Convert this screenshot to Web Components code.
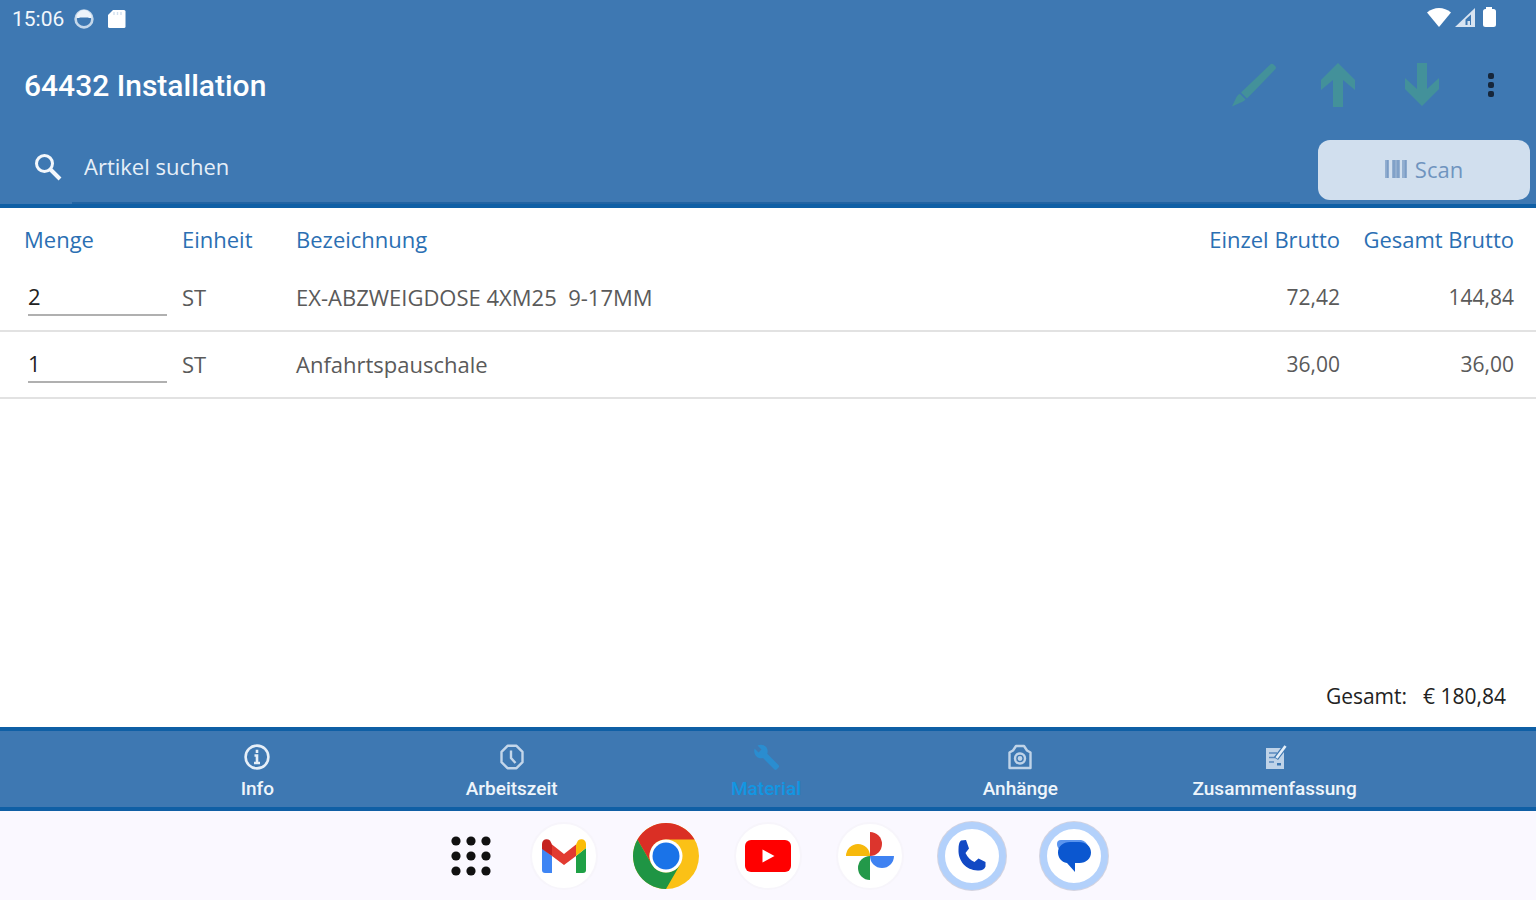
<!DOCTYPE html>
<html lang="de">
<head>
<meta charset="utf-8">
<meta name="viewport" content="width=device-width, initial-scale=1">
<title>64432 Installation</title>
<style>
      :root {
            --primary: #3e78b2;
            --primary-dark: #0f5fa5;
            --accent: #1296e2;
            --line: #e2e2e2;
      }

      body {
            margin: 0;
            min-height: 100vh;
            display: flex;
            flex-direction: column;
            background: #fff;
            font-family: "Open Sans", "Noto Sans", sans-serif;
            font-size: 22px;
      }

      main {
            flex: 1;
            display: flex;
            flex-direction: column;
            justify-content: space-between;
      }
</style>
</head>
<body>
      <status-bar time="15:06"></status-bar>
      <app-toolbar>64432 Installation</app-toolbar>
      <search-bar placeholder="Artikel suchen"></search-bar>
      <main>
            <material-table></material-table>
            <total-line label="Gesamt:">€ 180,84</total-line>
      </main>
      <tab-bar>
            <tab-item>
                  <svg slot="icon" width="28" height="28" viewBox="0 0 28 28" fill="none" stroke="#e6eff8" stroke-width="2.6">
                        <circle cx="14" cy="14" r="11.4"/>
                        <path d="M11.5 12.5H14V20M11 20h6M14 6.8v3.2"/>
                  </svg>
                  Info
            </tab-item>
            <tab-item>
                  <svg slot="icon" width="28" height="28" viewBox="0 0 28 28" fill="none" stroke="#c3d6ea" stroke-width="2.4">
                        <path d="M9.5 2.8h9l6 6v10.4l-6 6h-9l-6-6V8.8z" stroke-linejoin="round"/>
                        <path d="M13 7.5v7.5l4.500 5"/>
                  </svg>
                  Arbeitszeit
            </tab-item>
            <tab-item active>
                  <svg slot="icon" width="28" height="28" viewBox="0 0 28 28" fill="#2a8dd0">
                        <path d="M2.500 5.500 6.500 9.500 9.500 6.500 5.500 2.500C9 .8 14 2 15.400 6.500c.4 1.600.3 3-.2 4.300L26.500 22c.8.8.8 1.800 0 2.600l-1.700 1.700c-.8.8-1.800.8-2.600 0L11 15c-4.500 1.500-10-2.500-8.500-9.500z"/>
                  </svg>
                  Material
            </tab-item>
            <tab-item>
                  <svg slot="icon" width="28" height="28" viewBox="0 0 28 28" fill="none" stroke="#bfd3e8" stroke-width="2.4">
                        <path d="M3.500 25V9.500L7 7.500 10 3h8l3 4.500 3.500 2V25z" stroke-linejoin="round"/>
                        <circle cx="14" cy="15.500" r="5"/>
                        <circle cx="14" cy="15.500" r="1.200"/>
                  </svg>
                  Anhänge
            </tab-item>
            <tab-item>
                  <svg slot="icon" width="28" height="28" viewBox="0 0 28 28">
                        <path d="M5 5h18v21H5z" fill="#bfd3e8"/>
                        <path d="M8 10h8M8 14.500h7M8 19h5" stroke="#5b8bbe" stroke-width="1.6"/>
                        <path d="M16 20h4v2.500h-4z" fill="#3e78b2"/>
                        <path d="M15 15.500 24.500 3" stroke="#3e78b2" stroke-width="5"/>
                        <path d="M15.500 15 24.500 3" stroke="#e4eef8" stroke-width="2.6"/>
                  </svg>
                  Zusammenfassung
            </tab-item>
      </tab-bar>
      <task-dock></task-dock>

<script>
class StatusBar extends HTMLElement {
      constructor() {
            super();
            this._shadowRoot = this.attachShadow({ mode: "open" });
      }
      connectedCallback() {
            this.render();
      }

      render() {
            this._shadowRoot.innerHTML =
                  `
                  <style>
                        :host {
                              display: flex;
                              align-items: center;
                              justify-content: space-between;
                              height: 38px;
                              padding: 0 37px 0 12px;
                              background: var(--primary);
                              color: #f2f7fc;
                              font-family: Roboto, sans-serif;
                              font-size: 21px;
                        }

                        div {
                              display: flex;
                              align-items: center;
                              gap: 10px;
                        }

                        .signal {
                              gap: 4px;
                              padding-bottom: 4px;
                        }
                  </style>
                  <div>
                        <span>${this.getAttribute("time")}</span>
                        <svg width="20" height="20" viewBox="0 0 20 20">
                              <circle cx="10" cy="10" r="8.400" fill="none" stroke="#c4d7ea" stroke-width="2.6"/>
                              <path d="M2.500 6.500C4 3 7 1 10 1s6 2 7.500 5.500V9h-15z" fill="#eef4fa"/>
                              <path d="M5.500 8.500h9c0 3-2 4.500-4.500 4.500s-4.500-1.500-4.500-4.500z" fill="#3e78b2"/>
                        </svg>
                        <svg width="24" height="20" viewBox="0 0 24 20">
                              <path d="M9 1h11a1.500 1.500 0 0 1 1.500 1.500v15A1.500 1.500 0 0 1 20 19H5.500A1.500 1.500 0 0 1 4 17.500V6z" fill="#fff"/>
                              <path d="M10 3v3M13.500 3v3M17 3v3" stroke="#d2e0ee" stroke-width="1.4"/>
                        </svg>
                  </div>
                  <div class="signal">
                        <svg width="24" height="20" viewBox="0 0 24 20"><path d="M0 5.500C7-.5 17-.5 24 5.500L12 20z" fill="#fff"/></svg>
                        <svg width="20" height="20" viewBox="0 0 20 20">
                              <path d="M0 20 20 1v19z" fill="#d8e4f1"/>
                              <path d="M10.500 18v-5.500l5.500-5V18z" fill="#3e78b2"/>
                              <path d="M12.500 14h2.500v4h-2.500z" fill="#d8e4f1"/>
                        </svg>
                        <svg width="20" height="22" viewBox="0 0 20 22"><path d="M7 3V1h6v2h1.500A2.500 2.500 0 0 1 17 5.500v13a2.500 2.500 0 0 1-2.500 2.500h-8A2.500 2.500 0 0 1 4 18.500v-13A2.500 2.500 0 0 1 6.500 3z" fill="#fff"/></svg>
                  </div>
            `;
      }
}

class AppToolbar extends HTMLElement {
      constructor() {
            super();
            this._shadowRoot = this.attachShadow({ mode: "open" });
      }
      connectedCallback() {
            this.render();
      }

      render() {
            this._shadowRoot.innerHTML =
                  `
                  <style>
                        :host {
                              display: flex;
                              align-items: center;
                              justify-content: space-between;
                              height: 94px;
                              padding: 0 36px 2px 24px;
                              background: var(--primary);
                              color: #fff;
                        }

                        h1 {
                              margin: 0;
                              font-family: Roboto, sans-serif;
                              font-size: 30px;
                              font-weight: 500;
                        }

                        .actions {
                              display: flex;
                              align-items: center;
                              gap: 36px;
                        }

                        button {
                              display: flex;
                              justify-content: center;
                              width: 48px;
                              padding: 0;
                              border: 0;
                              background: none;
                              color: #43919a;
                        }

                        .more {
                              width: 18px;
                              color: #16263a;
                        }
                  </style>
                  <h1><slot></slot></h1>
                  <div class="actions">
                        <button type="button" aria-label="Bearbeiten">
                              <svg width="48" height="44" viewBox="0 0 48 44" fill="currentColor">
                                    <path d="M40.500 1.200q1.500-1 3 .3l1.800 1.800q1.300 1.500 0 3L17 35.500 11 29.500zM9.800 30.800l5.700 5.700q-1 1.200-3 2.200L2 43.500 6.500 34q1.300-2.500 3.300-3.200z"/>
                              </svg>
                        </button>
                        <button type="button" aria-label="Nach oben">
                              <svg width="36" height="44" viewBox="0 0 36 44" fill="currentColor">
                                    <path d="M18 0 35 17v10L23 17v27H13V17L1 27V17z"/>
                              </svg>
                        </button>
                        <button type="button" aria-label="Nach unten">
                              <svg width="36" height="44" viewBox="0 0 36 44" fill="currentColor">
                                    <path d="M18 43 1 26V15l12 11V0h10v26l12-11v11z"/>
                              </svg>
                        </button>
                        <button class="more" type="button" aria-label="Mehr">
                              <svg width="8" height="26" viewBox="0 0 8 26" fill="currentColor">
                                    <rect x="1" y="1" width="6" height="6" rx="2"/>
                                    <rect x="1" y="10" width="6" height="6" rx="2"/>
                                    <rect x="1" y="19" width="6" height="6" rx="2"/>
                              </svg>
                        </button>
                  </div>
            `;
      }
}

class SearchBar extends HTMLElement {
      constructor() {
            super();
            this._shadowRoot = this.attachShadow({ mode: "open" });
      }
      connectedCallback() {
            this.render();
      }

      render() {
            const placeholder = this.getAttribute("placeholder");
            this._shadowRoot.innerHTML =
                  `
                  <style>
                        :host {
                              display: flex;
                              align-items: stretch;
                              height: 70px;
                              border-bottom: 4px solid var(--primary-dark);
                              background: var(--primary);
                        }

                        label {
                              display: flex;
                              align-items: center;
                              justify-content: flex-end;
                              box-sizing: border-box;
                              width: 72px;
                              padding: 0 10px 4px 0;
                        }

                        input {
                              flex: 1;
                              min-width: 0;
                              padding: 0 12px 4px;
                              border: 0;
                              border-bottom: 2px solid #2264a3;
                              outline: 0;
                              background: none;
                              color: #fff;
                              font: inherit;
                        }

                        input::placeholder {
                              color: #e6eff8;
                              opacity: 1;
                        }

                        button {
                              display: flex;
                              align-items: center;
                              justify-content: center;
                              gap: 8px;
                              width: 212px;
                              margin: 6px 6px 4px 28px;
                              padding: 0 0 2px;
                              border: 0;
                              border-radius: 12px;
                              background: #d1dfee;
                              color: #6f94bf;
                              font: inherit;
                        }
                  </style>
                  <label for="search">
                        <svg width="28" height="28" viewBox="0 0 28 28" fill="none" stroke="#f4f8fc" stroke-width="3">
                              <circle cx="10.500" cy="10.500" r="8"/>
                              <path d="M16.500 16.500 26 26" stroke-width="4"/>
                        </svg>
                  </label>
                  <input id="search" type="text" placeholder="${placeholder}" aria-label="${placeholder}">
                  <button type="button">
                        <svg width="22" height="18" viewBox="0 0 22 18">
                              <path d="M0 0h4v18H0zM7 0h8v18H7zM17 0h5v18h-5z" fill="#93afd0"/>
                              <path d="M2.500 0v18M9 0v18M13 0v18M20.500 0v18" stroke="#7b9dc5" stroke-width="1.5"/>
                        </svg>
                        Scan
                  </button>
            `;
      }
}

const items = [
      { menge: "2", einheit: "ST", bezeichnung: "EX-ABZWEIGDOSE 4XM25  9-17MM", einzel: "72,42", gesamt: "144,84" },
      { menge: "1", einheit: "ST", bezeichnung: "Anfahrtspauschale", einzel: "36,00", gesamt: "36,00" }
];

class MaterialTable extends HTMLElement {
      constructor() {
            super();
            this._shadowRoot = this.attachShadow({ mode: "open" });
      }
      connectedCallback() {
            this.render();
      }

      render() {
            this._shadowRoot.innerHTML =
                  `
                  <style>
                        :host {
                              display: block;
                        }

                        table {
                              width: 100%;
                              table-layout: fixed;
                              border-collapse: separate;
                              border-spacing: 0;
                        }

                        th, td {
                              box-sizing: border-box;
                              padding: 0;
                              text-align: left;
                              font-weight: 400;
                              line-height: 30px;
                              white-space: pre;
                        }

                        th {
                              height: 57px;
                              padding-top: 4px;
                              color: #2b6fb3;
                        }

                        td {
                              height: 67px;
                              padding-bottom: 2px;
                              border-bottom: 2px solid var(--line);
                              color: #5a5a5a;
                        }

                        .menge { width: 182px; padding-left: 24px; }
                        .einheit { width: 114px; }
                        .einzel { width: 174px; text-align: right; }
                        .gesamt { width: 196px; padding-right: 22px; text-align: right; }

                        td.menge { padding-bottom: 0; }
                        td.einzel, td.gesamt { font-size: 21px; }

                        input {
                              display: block;
                              box-sizing: border-box;
                              width: 139px;
                              height: 36px;
                              margin-left: 4px;
                              padding: 0 0 2px;
                              border: 0;
                              border-bottom: 2px solid #b0b0b0;
                              outline: 0;
                              background: none;
                              color: #222;
                              font: inherit;
                        }
                  </style>
                  <table>
                        <thead>
                              <tr>
                                    <th class="menge" id="menge">Menge</th>
                                    <th class="einheit">Einheit</th>
                                    <th>Bezeichnung</th>
                                    <th class="einzel">Einzel Brutto</th>
                                    <th class="gesamt">Gesamt Brutto</th>
                              </tr>
                        </thead>
                        <tbody>
                              ${items.map(item => `
                              <tr>
                                    <td class="menge"><input type="text" inputmode="numeric" value="${item.menge}" aria-labelledby="menge"></td>
                                    <td>${item.einheit}</td>
                                    <td>${item.bezeichnung}</td>
                                    <td class="einzel">${item.einzel}</td>
                                    <td class="gesamt">${item.gesamt}</td>
                              </tr>`).join("")}
                        </tbody>
                  </table>
            `;
      }
}

class TotalLine extends HTMLElement {
      constructor() {
            super();
            this._shadowRoot = this.attachShadow({ mode: "open" });
      }
      connectedCallback() {
            this.render();
      }

      render() {
            this._shadowRoot.innerHTML =
                  `
                  <style>
                        :host {
                              display: flex;
                              justify-content: flex-end;
                              gap: 16px;
                              padding: 16px 30px;
                              font-size: 21px;
                              line-height: 30px;
                              color: #222;
                        }
                  </style>
                  <span>${this.getAttribute("label")}</span>
                  <span><slot></slot></span>
            `;
      }
}

class TabBar extends HTMLElement {
      constructor() {
            super();
            this._shadowRoot = this.attachShadow({ mode: "open" });
      }
      connectedCallback() {
            this.render();
      }

      render() {
            this._shadowRoot.innerHTML =
                  `
                  <style>
                        :host {
                              display: block;
                              padding-right: 4px;
                              border-top: 4px solid var(--primary-dark);
                              border-bottom: 4px solid var(--primary-dark);
                              background: var(--primary);
                        }

                        nav {
                              display: grid;
                              grid-template-columns: repeat(5, minmax(0, 1fr));
                              width: 83%;
                              height: 76px;
                              margin: 0 auto;
                        }
                  </style>
                  <nav><slot></slot></nav>
            `;
      }
}

class TabItem extends HTMLElement {
      constructor() {
            super();
            this._shadowRoot = this.attachShadow({ mode: "open" });
      }
      connectedCallback() {
            this.render();
      }

      render() {
            this._shadowRoot.innerHTML =
                  `
                  <style>
                        :host {
                              display: block;
                        }

                        a {
                              display: flex;
                              flex-direction: column;
                              align-items: center;
                              gap: 6px;
                              padding-top: 12px;
                              color: #eef5fb;
                              font-family: Roboto, sans-serif;
                              font-size: 19px;
                              font-weight: 500;
                              line-height: 24px;
                              text-decoration: none;
                        }

                        :host([active]) a {
                              color: var(--accent);
                        }
                  </style>
                  <a href="#" ${this.hasAttribute("active") ? 'aria-current="page"' : ""}>
                        <slot name="icon"></slot>
                        <span><slot></slot></span>
                  </a>
            `;
      }
}

class TaskDock extends HTMLElement {
      constructor() {
            super();
            this._shadowRoot = this.attachShadow({ mode: "open" });
      }
      connectedCallback() {
            this.render();
      }

      render() {
            this._shadowRoot.innerHTML =
                  `
                  <style>
                        :host {
                              display: flex;
                              justify-content: center;
                              align-items: center;
                              gap: 34px;
                              height: 89px;
                              background: #faf8ff;
                        }

                        button {
                              display: flex;
                              align-items: center;
                              justify-content: center;
                              box-sizing: border-box;
                              width: 68px;
                              height: 68px;
                              padding: 0;
                              border: 0;
                              border-radius: 50%;
                              background: none;
                        }

                        .launcher {
                              padding-left: 18px;
                        }

                        .round {
                              border: 2px solid #f7f5fb;
                              background: #fff;
                        }

                        .recent {
                              border: 7px solid #b3d1fb;
                              background: #fff;
                              box-shadow: 0 0 0 1px #d3d3e0;
                        }
                  </style>
                  <button class="launcher" type="button" aria-label="Alle Apps">
                        <svg width="40" height="40" viewBox="0 0 40 40" fill="#111">
                              <circle cx="5" cy="5" r="4.6"/><circle cx="20" cy="5" r="4.6"/><circle cx="35" cy="5" r="4.6"/>
                              <circle cx="5" cy="20" r="4.6"/><circle cx="20" cy="20" r="4.6"/><circle cx="35" cy="20" r="4.6"/>
                              <circle cx="5" cy="35" r="4.6"/><circle cx="20" cy="35" r="4.6"/><circle cx="35" cy="35" r="4.6"/>
                        </svg>
                  </button>
                  <button class="round" type="button" aria-label="Gmail">
                        <svg width="44" height="34" viewBox="0 0 44 34">
                              <path d="M0 9l10 8v17H3a3 3 0 0 1-3-3z" fill="#3f85f4"/>
                              <path d="M44 9l-10 8v17h7a3 3 0 0 0 3-3z" fill="#1fa046"/>
                              <path d="M34 5.500V17l10-8V5c0-5-5-6-8-3.500z" fill="#fbbc05"/>
                              <path d="M10 5.500 22 15 34 5.500V17L22 26 10 17z" fill="#e23b31"/>
                              <path d="M0 5v5l10 7V5.500L8 1.500C5-1 0 0 0 5z" fill="#c5221f"/>
                        </svg>
                  </button>
                  <button type="button" aria-label="Chrome">
                        <svg width="68" height="68" viewBox="0 0 68 68">
                              <circle cx="34" cy="34" r="33" fill="#fbc116"/>
                              <path d="M5.420 17.500A33 33 0 0 1 62.580 17.500H34A16.500 16.500 0 0 0 19.710 42.250z" fill="#da2f25"/>
                              <path d="M5.420 17.500A33 33 0 0 0 34 67L48.290 42.250A16.500 16.500 0 0 1 19.710 42.250z" fill="#1f9544"/>
                              <circle cx="34" cy="34" r="16.500" fill="#fff"/>
                              <circle cx="34" cy="34" r="13.500" fill="#1a73e8"/>
                        </svg>
                  </button>
                  <button class="round" type="button" aria-label="YouTube">
                        <svg width="46" height="32" viewBox="0 0 46 32">
                              <rect x="0" y="0" width="46" height="32" rx="6" fill="#f00"/>
                              <path d="M17.500 9.500 29.500 16l-12 6.500z" fill="#fff"/>
                        </svg>
                  </button>
                  <button class="round" type="button" aria-label="Fotos">
                        <svg width="48" height="48" viewBox="0 0 48 48">
                              <path d="M24 0a12 12 0 0 1 0 24z" fill="#dc352d"/>
                              <path d="M24 24H0a12 12 0 0 1 24 0z" fill="#f7b90c"/>
                              <path d="M24 24v24a12 12 0 0 1 0-24z" fill="#23994a"/>
                              <path d="M24 24h24a12 12 0 0 1-24 0z" fill="#3f82f2"/>
                        </svg>
                  </button>
                  <button class="recent" type="button" aria-label="Telefon">
                        <svg width="32" height="34" viewBox="0 0 32 34">
                              <path d="M5 1.500 10 1l3 8.500-3.500 4.500c2 4.500 5 7 9 9l4-3.500 7 3.500v4.500c-1 3-4 4.500-8 4C10 31 2 22 2.500 10.500 2.500 6 3 3 5 1.500z" fill="#1249c4"/>
                        </svg>
                  </button>
                  <button class="recent" type="button" aria-label="Messages">
                        <svg width="36" height="34" viewBox="0 0 36 34">
                              <path d="M5 1h20q5 1 7 6L5 12Q1 9 1 5 1 1 5 1z" fill="#5a94ee"/>
                              <path d="M14 3h9c7 0 12 4.500 12 10.500S30 24 23.500 24H19v9l-8-9C5 23 2 18.500 2 13.500 2 7.500 7 3 14 3z" fill="#0b57d0"/>
                        </svg>
                  </button>
            `;
      }
}

customElements.define('status-bar', StatusBar);
customElements.define('app-toolbar', AppToolbar);
customElements.define('search-bar', SearchBar);
customElements.define('material-table', MaterialTable);
customElements.define('total-line', TotalLine);
customElements.define('tab-bar', TabBar);
customElements.define('tab-item', TabItem);
customElements.define('task-dock', TaskDock);
</script>
</body>
</html>
